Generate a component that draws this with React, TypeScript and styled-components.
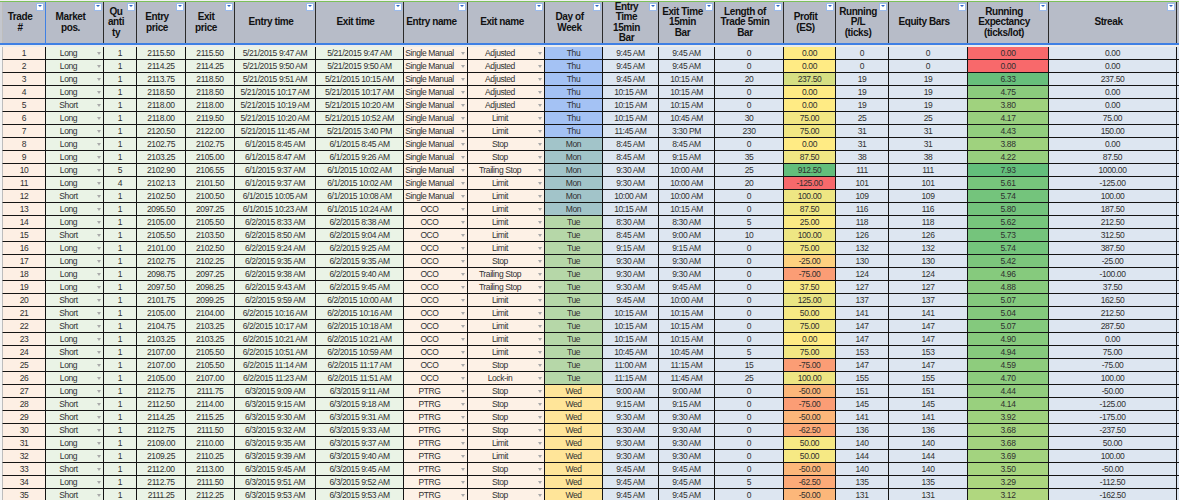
import React from 'react';
import styled, { createGlobalStyle } from 'styled-components';

const GlobalStyle = createGlobalStyle`
    html, body {
        margin: 0;
        padding: 0;
        background: #f6f6f6;
    }
    body {
        font-family: "Liberation Sans", Arial, sans-serif;
    }
`;

const colors = {
    header: '#b7bcc8',
    headerLine: '#2a2a2a',
    frozen: '#3f80e4',
    topLine: '#7cc05a',
    grid: '#141414',
    gutter: '#f4f4f4',
    gutterLine: '#bdbdbd',
    peach: '#fdefe4',
    peachName: '#fdf1e6',
    green: '#eaf3e6',
    blue: '#dde6f1',
    text: '#303030',
    arrow: '#a9a9a9',
};

const dayColors: Record<string, string> = {
    Mon: '#a2c4c9',
    Tue: '#b6d7a8',
    Wed: '#ffe599',
    Thu: '#a4c2f4',
};

type Kind = 'plain' | 'select' | 'day' | 'profit' | 'expect';

type Column = {
    title: string[];
    width: number;
    bg: string;
    kind: Kind;
};

const columns: Column[] = [
    { title: ['Trade', '#'], width: 44, bg: colors.peach, kind: 'plain' },
    { title: ['Market', 'pos.'], width: 58, bg: colors.green, kind: 'select' },
    { title: ['Qu', 'anti', 'ty'], width: 33, bg: colors.green, kind: 'plain' },
    { title: ['Entry', 'price'], width: 49, bg: colors.green, kind: 'plain' },
    { title: ['Exit', 'price'], width: 49, bg: colors.green, kind: 'plain' },
    { title: ['Entry time'], width: 81, bg: colors.green, kind: 'plain' },
    { title: ['Exit time'], width: 88, bg: colors.green, kind: 'plain' },
    { title: ['Entry name'], width: 64, bg: colors.peachName, kind: 'select' },
    { title: ['Exit name'], width: 77, bg: colors.peachName, kind: 'select' },
    { title: ['Day of', 'Week'], width: 58, bg: colors.blue, kind: 'day' },
    { title: ['Entry', 'Time', '15min', 'Bar'], width: 56, bg: colors.blue, kind: 'plain' },
    { title: ['Exit Time', '15min', 'Bar'], width: 56, bg: colors.blue, kind: 'plain' },
    { title: ['Length of', 'Trade 5min', 'Bar'], width: 69, bg: colors.blue, kind: 'plain' },
    { title: ['Profit', '(ES)'], width: 52, bg: colors.blue, kind: 'profit' },
    { title: ['Running', 'P/L', '(ticks)'], width: 53, bg: colors.blue, kind: 'plain' },
    { title: ['Equity Bars'], width: 79, bg: colors.blue, kind: 'plain' },
    { title: ['Running', 'Expectancy', '(ticks/lot)'], width: 81, bg: colors.blue, kind: 'expect' },
    { title: ['Streak'], width: 128, bg: colors.blue, kind: 'plain' },
];

// trade|pos|qty|entry|exit|entry time|exit time|entry name|exit name|day|et15|xt15|len|profit|pl|equity|expect|streak
const raw = [
    '1|Long|1|2115.50|2115.50|5/21/2015 9:47 AM|5/21/2015 9:47 AM|SM|Adjusted|Thu|9:45 AM|9:45 AM|0|0.00|0|0|0.00|0.00',
    '2|Long|1|2114.25|2114.25|5/21/2015 9:50 AM|5/21/2015 9:50 AM|SM|Adjusted|Thu|9:45 AM|9:45 AM|0|0.00|0|0|0.00|0.00',
    '3|Long|1|2113.75|2118.50|5/21/2015 9:51 AM|5/21/2015 10:15 AM|SM|Adjusted|Thu|9:45 AM|10:15 AM|20|237.50|19|19|6.33|237.50',
    '4|Long|1|2118.50|2118.50|5/21/2015 10:17 AM|5/21/2015 10:17 AM|SM|Adjusted|Thu|10:15 AM|10:15 AM|0|0.00|19|19|4.75|0.00',
    '5|Short|1|2118.00|2118.00|5/21/2015 10:19 AM|5/21/2015 10:20 AM|SM|Adjusted|Thu|10:15 AM|10:15 AM|0|0.00|19|19|3.80|0.00',
    '6|Long|1|2118.00|2119.50|5/21/2015 10:20 AM|5/21/2015 10:52 AM|SM|Limit|Thu|10:15 AM|10:45 AM|30|75.00|25|25|4.17|75.00',
    '7|Long|1|2120.50|2122.00|5/21/2015 11:45 AM|5/21/2015 3:40 PM|SM|Limit|Thu|11:45 AM|3:30 PM|230|75.00|31|31|4.43|150.00',
    '8|Long|1|2102.75|2102.75|6/1/2015 8:45 AM|6/1/2015 8:45 AM|SM|Stop|Mon|8:45 AM|8:45 AM|0|0.00|31|31|3.88|0.00',
    '9|Long|1|2103.25|2105.00|6/1/2015 8:47 AM|6/1/2015 9:26 AM|SM|Stop|Mon|8:45 AM|9:15 AM|35|87.50|38|38|4.22|87.50',
    '10|Long|5|2102.90|2106.55|6/1/2015 9:37 AM|6/1/2015 10:02 AM|SM|Trailing Stop|Mon|9:30 AM|10:00 AM|25|912.50|111|111|7.93|1000.00',
    '11|Long|4|2102.13|2101.50|6/1/2015 9:37 AM|6/1/2015 10:02 AM|SM|Limit|Mon|9:30 AM|10:00 AM|20|-125.00|101|101|5.61|-125.00',
    '12|Short|1|2102.50|2100.50|6/1/2015 10:05 AM|6/1/2015 10:08 AM|SM|Limit|Mon|10:00 AM|10:00 AM|0|100.00|109|109|5.74|100.00',
    '13|Long|1|2095.50|2097.25|6/1/2015 10:23 AM|6/1/2015 10:24 AM|OCO|Limit|Mon|10:15 AM|10:15 AM|0|87.50|116|116|5.80|187.50',
    '14|Long|1|2105.00|2105.50|6/2/2015 8:33 AM|6/2/2015 8:38 AM|OCO|Limit|Tue|8:30 AM|8:30 AM|5|25.00|118|118|5.62|212.50',
    '15|Short|1|2105.50|2103.50|6/2/2015 8:50 AM|6/2/2015 9:04 AM|OCO|Limit|Tue|8:45 AM|9:00 AM|10|100.00|126|126|5.73|312.50',
    '16|Long|1|2101.00|2102.50|6/2/2015 9:24 AM|6/2/2015 9:25 AM|OCO|Limit|Tue|9:15 AM|9:15 AM|0|75.00|132|132|5.74|387.50',
    '17|Long|1|2102.75|2102.25|6/2/2015 9:35 AM|6/2/2015 9:35 AM|OCO|Stop|Tue|9:30 AM|9:30 AM|0|-25.00|130|130|5.42|-25.00',
    '18|Long|1|2098.75|2097.25|6/2/2015 9:38 AM|6/2/2015 9:40 AM|OCO|Trailing Stop|Tue|9:30 AM|9:30 AM|0|-75.00|124|124|4.96|-100.00',
    '19|Long|1|2097.50|2098.25|6/2/2015 9:43 AM|6/2/2015 9:45 AM|OCO|Trailing Stop|Tue|9:30 AM|9:45 AM|0|37.50|127|127|4.88|37.50',
    '20|Short|1|2101.75|2099.25|6/2/2015 9:59 AM|6/2/2015 10:00 AM|OCO|Limit|Tue|9:45 AM|10:00 AM|0|125.00|137|137|5.07|162.50',
    '21|Short|1|2105.00|2104.00|6/2/2015 10:16 AM|6/2/2015 10:16 AM|OCO|Limit|Tue|10:15 AM|10:15 AM|0|50.00|141|141|5.04|212.50',
    '22|Short|1|2104.75|2103.25|6/2/2015 10:17 AM|6/2/2015 10:18 AM|OCO|Limit|Tue|10:15 AM|10:15 AM|0|75.00|147|147|5.07|287.50',
    '23|Long|1|2103.25|2103.25|6/2/2015 10:21 AM|6/2/2015 10:21 AM|OCO|Limit|Tue|10:15 AM|10:15 AM|0|0.00|147|147|4.90|0.00',
    '24|Short|1|2107.00|2105.50|6/2/2015 10:51 AM|6/2/2015 10:59 AM|OCO|Limit|Tue|10:45 AM|10:45 AM|5|75.00|153|153|4.94|75.00',
    '25|Long|1|2107.00|2105.50|6/2/2015 11:14 AM|6/2/2015 11:17 AM|OCO|Stop|Tue|11:00 AM|11:15 AM|15|-75.00|147|147|4.59|-75.00',
    '26|Long|1|2105.00|2107.00|6/2/2015 11:23 AM|6/2/2015 11:51 AM|OCO|Lock-in|Tue|11:15 AM|11:45 AM|25|100.00|155|155|4.70|100.00',
    '27|Long|1|2112.75|2111.75|6/3/2015 9:09 AM|6/3/2015 9:11 AM|PTRG|Stop|Wed|9:00 AM|9:00 AM|0|-50.00|151|151|4.44|-50.00',
    '28|Short|1|2112.50|2114.00|6/3/2015 9:15 AM|6/3/2015 9:18 AM|PTRG|Stop|Wed|9:15 AM|9:15 AM|0|-75.00|145|145|4.14|-125.00',
    '29|Short|1|2114.25|2115.25|6/3/2015 9:30 AM|6/3/2015 9:31 AM|PTRG|Stop|Wed|9:30 AM|9:30 AM|0|-50.00|141|141|3.92|-175.00',
    '30|Short|1|2112.75|2111.50|6/3/2015 9:32 AM|6/3/2015 9:33 AM|PTRG|Stop|Wed|9:30 AM|9:30 AM|0|-62.50|136|136|3.68|-237.50',
    '31|Long|1|2109.00|2110.00|6/3/2015 9:35 AM|6/3/2015 9:37 AM|PTRG|Limit|Wed|9:30 AM|9:30 AM|0|50.00|140|140|3.68|50.00',
    '32|Long|1|2109.25|2110.25|6/3/2015 9:39 AM|6/3/2015 9:40 AM|PTRG|Limit|Wed|9:30 AM|9:30 AM|0|50.00|144|144|3.69|100.00',
    '33|Short|1|2112.00|2113.00|6/3/2015 9:45 AM|6/3/2015 9:45 AM|PTRG|Stop|Wed|9:45 AM|9:45 AM|0|-50.00|140|140|3.50|-50.00',
    '34|Long|1|2112.75|2111.50|6/3/2015 9:51 AM|6/3/2015 9:52 AM|PTRG|Stop|Wed|9:45 AM|9:45 AM|5|-62.50|135|135|3.29|-112.50',
    '35|Short|1|2111.25|2112.25|6/3/2015 9:53 AM|6/3/2015 9:53 AM|PTRG|Stop|Wed|9:45 AM|9:45 AM|0|-50.00|131|131|3.12|-162.50',
];

const rows = raw.map((line) => line.split('|').map((v) => (v === 'SM' ? 'Single Manual' : v)));

type RGB = [number, number, number];
const yellow: RGB = [255, 235, 132];
const green: RGB = [99, 190, 123];
const red: RGB = [248, 105, 107];
const paleGreen: RGB = [190, 220, 128];

const mix = (a: RGB, b: RGB, t: number) => {
    const c = a.map((v, i) => Math.round(v + (b[i] - v) * t));
    return `rgb(${c[0]}, ${c[1]}, ${c[2]})`;
};

const clamp = (t: number) => Math.max(0, Math.min(1, t));

const profitColor = (v: number) =>
    v >= 0 ? mix(yellow, green, clamp(v / 912.5)) : mix(yellow, red, clamp(-v / 125));

const expectColor = (v: number) =>
    v <= 0 ? mix(red, red, 0) : mix(paleGreen, green, clamp((v - 2.5) / 4));

const Sheet = styled.div`
    height: 500px;
    overflow: hidden;
    padding-top: 1px;
    background: #f1f1f1;
    color: ${colors.text};
`;

const HeaderRow = styled.div`
    display: flex;
    height: 41px;
    padding-left: 2px;
    background: #c4c7ce;
    border-top: 1px solid ${colors.topLine};
    border-bottom: 2px solid ${colors.frozen};
`;

const HeaderCell = styled.div<{ $w: number; $first?: boolean }>`
    position: relative;
    flex: none;
    width: ${(p) => p.$w}px;
    box-sizing: border-box;
    padding: 0 10px 0 2px;
    display: flex;
    align-items: center;
    justify-content: center;
    text-align: center;
    overflow: hidden;
    background: ${colors.header};
    border-right: 1px solid ${(p) => (p.$first ? colors.frozen : colors.headerLine)};
    border-left: ${(p) => (p.$first ? `1px solid ${colors.gutterLine}` : 'none')};
    font-size: 10px;
    font-weight: bold;
    letter-spacing: -0.4px;
    line-height: 10.5px;
    color: #111;
    white-space: nowrap;
`;

const HeaderFiller = styled.div`
    flex: 1;
    background: ${colors.header};
`;

const FilterButton = styled.div`
    position: absolute;
    top: 1px;
    right: 1px;
    width: 8px;
    height: 8px;
    box-sizing: border-box;
    background: #ffffff;
    border: 1px solid #9dbbea;
    display: flex;
    justify-content: center;
    padding-top: 1px;

    &::after {
        content: '';
        width: 0;
        height: 0;
        border-left: 2px solid transparent;
        border-right: 2px solid transparent;
        border-top: 2px solid #2f66c8;
    }
`;

const Gap = styled.div`
    height: 2px;
    background: #ececec;
`;

const Row = styled.div`
    display: flex;
    height: 13px;
    padding-left: 2px;
    background: ${colors.gutter};
`;

const Cell = styled.div<{ $w: number; $bg: string; $first?: boolean }>`
    flex: none;
    width: ${(p) => p.$w}px;
    height: 13px;
    box-sizing: border-box;
    display: flex;
    align-items: center;
    justify-content: center;
    overflow: hidden;
    white-space: nowrap;
    background: ${(p) => p.$bg};
    border-right: 1px solid ${colors.grid};
    border-bottom: 1px solid ${colors.grid};
    border-left: ${(p) => (p.$first ? `1px solid ${colors.gutterLine}` : 'none')};
    font-size: 8.5px;
    letter-spacing: -0.4px;
    line-height: 12px;
`;

const RowFiller = styled.div`
    flex: 1;
    height: 13px;
    box-sizing: border-box;
    background: ${colors.blue};
    border-bottom: 1px solid ${colors.grid};
`;

const ChipLabel = styled.span`
    flex: 1;
    text-align: center;
    overflow: hidden;
`;

const ChipArrow = styled.span`
    flex: none;
    width: 12px;
    display: flex;
    justify-content: flex-end;
    padding-right: 2px;
    box-sizing: border-box;

    &::after {
        content: '';
        width: 0;
        height: 0;
        border-left: 2.5px solid transparent;
        border-right: 2.5px solid transparent;
        border-top: 3px solid ${colors.arrow};
    }
`;

const cellBackground = (col: Column, value: string) => {
    if (col.kind === 'day') return dayColors[value] ?? col.bg;
    if (col.kind === 'profit') return profitColor(parseFloat(value));
    if (col.kind === 'expect') return expectColor(parseFloat(value));
    return col.bg;
};

const App = () => {
    return (
        <>
            <GlobalStyle />
            <Sheet>
                <HeaderRow>
                    {columns.map((col, i) => (
                        <HeaderCell key={col.title.join(' ')} $w={col.width} $first={i === 0}>
                            <div>
                                {col.title.map((line) => (
                                    <div key={line}>{line}</div>
                                ))}
                            </div>
                            <FilterButton />
                        </HeaderCell>
                    ))}
                    <HeaderFiller />
                </HeaderRow>
                <Gap />
                {rows.map((row) => (
                    <Row key={row[0]}>
                        {columns.map((col, i) => (
                            <Cell key={i} $w={col.width} $bg={cellBackground(col, row[i])} $first={i === 0}>
                                {col.kind === 'select' ? (
                                    <>
                                        <ChipLabel>{row[i]}</ChipLabel>
                                        <ChipArrow />
                                    </>
                                ) : (
                                    row[i]
                                )}
                            </Cell>
                        ))}
                        <RowFiller />
                    </Row>
                ))}
            </Sheet>
        </>
    );
};

export default App;
